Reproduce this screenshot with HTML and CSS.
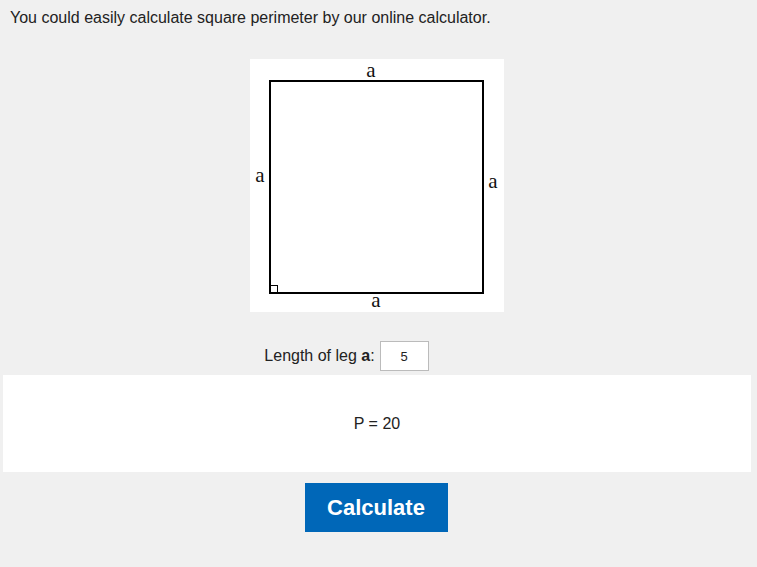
FILE: index.html
```html
<!DOCTYPE html>
<html>
<head>
<meta charset="utf-8">
<link rel="stylesheet" href="styles.css">
</head>
<body>
<p class="intro">You could easily calculate square perimeter by our online calculator.</p>
<div class="figwrap">
  <div class="figure">
    <svg width="254" height="253" viewBox="0 0 254 253">
      <rect x="20" y="22" width="213" height="212" fill="#fff" stroke="#000" stroke-width="2"/>
      <line x1="19" y1="234.5" x2="234" y2="234.5" stroke="#000" stroke-width="1"/>
      <rect x="20.5" y="226.5" width="7" height="7" fill="none" stroke="#000" stroke-width="1"/>
      <text class="lbl" x="121" y="18" text-anchor="middle">a</text>
      <text class="lbl" x="10" y="123" text-anchor="middle">a</text>
      <text class="lbl" x="243" y="129" text-anchor="middle">a</text>
      <text class="lbl" x="126" y="248" text-anchor="middle">a</text>
    </svg>
  </div>
</div>
<div class="row">
  <label class="leg">Length of leg <b>a</b>:</label>
  <input class="inp" type="text" value="5">
</div>
<div class="result">P = 20</div>
<div class="actions">
  <button class="btn">Calculate</button>
</div>
</body>
</html>
```
FILE: styles.css
```css
html, body {
  margin: 0;
  padding: 0;
  background: #f0f0f0;
  font-family: "Liberation Sans", Arial, sans-serif;
  color: #222;
}
.intro {
  margin: 9px 0 0 10px;
  font-size: 16px;
  line-height: 18px;
}
.figwrap {
  display: flex;
  justify-content: center;
  padding-right: 4px;
  margin-top: 32px;
}
.figure {
  width: 254px;
  height: 253px;
  background: #fff;
}
.figure svg {
  display: block;
  overflow: visible;
}
.lbl {
  font-family: "Liberation Serif", "Times New Roman", serif;
  font-size: 21px;
  fill: #111;
}
.row {
  display: flex;
  justify-content: center;
  align-items: center;
  margin-top: 29px;
  padding-right: 64px;
  gap: 5px;
}
.leg {
  font-size: 16px;
  color: #222;
}
.inp {
  box-sizing: border-box;
  width: 49px;
  height: 30px;
  border: 1px solid #bbb;
  background: #fff;
  text-align: center;
  font-family: "Liberation Sans", Arial, sans-serif;
  font-size: 13px;
  padding: 0;
  color: #222;
}
.result {
  margin: 4px 6px 0 3px;
  height: 97px;
  background: #fff;
  display: flex;
  align-items: center;
  justify-content: center;
  font-size: 16px;
  color: #222;
}
.actions {
  display: flex;
  justify-content: center;
  margin-top: 11px;
  padding-right: 5px;
}
.btn {
  width: 143px;
  height: 49px;
  border: none;
  background: #0067b8;
  color: #fff;
  font-family: "Liberation Sans", Arial, sans-serif;
  font-weight: bold;
  font-size: 22px;
  padding: 0;
}
```
